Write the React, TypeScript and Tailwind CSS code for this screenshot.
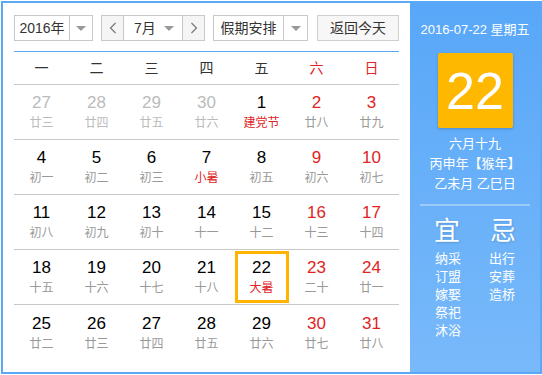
import React from "react";

type Day = { d: number; l: string; dim?: boolean; red?: boolean; lred?: boolean; sel?: boolean };

const weeks: Day[][] = [
  [
    { d: 27, l: "廿三", dim: true },
    { d: 28, l: "廿四", dim: true },
    { d: 29, l: "廿五", dim: true },
    { d: 30, l: "廿六", dim: true },
    { d: 1, l: "建党节", lred: true },
    { d: 2, l: "廿八", red: true },
    { d: 3, l: "廿九", red: true },
  ],
  [
    { d: 4, l: "初一" },
    { d: 5, l: "初二" },
    { d: 6, l: "初三" },
    { d: 7, l: "小暑", lred: true },
    { d: 8, l: "初五" },
    { d: 9, l: "初六", red: true },
    { d: 10, l: "初七", red: true },
  ],
  [
    { d: 11, l: "初八" },
    { d: 12, l: "初九" },
    { d: 13, l: "初十" },
    { d: 14, l: "十一" },
    { d: 15, l: "十二" },
    { d: 16, l: "十三", red: true },
    { d: 17, l: "十四", red: true },
  ],
  [
    { d: 18, l: "十五" },
    { d: 19, l: "十六" },
    { d: 20, l: "十七" },
    { d: 21, l: "十八" },
    { d: 22, l: "大暑", lred: true, sel: true },
    { d: 23, l: "二十", red: true },
    { d: 24, l: "廿一", red: true },
  ],
  [
    { d: 25, l: "廿二" },
    { d: 26, l: "廿三" },
    { d: 27, l: "廿四" },
    { d: 28, l: "廿五" },
    { d: 29, l: "廿六" },
    { d: 30, l: "廿七", red: true },
    { d: 31, l: "廿八", red: true },
  ],
];

const heads = ["一", "二", "三", "四", "五", "六", "日"];

const Caret = () => (
  <span className="w-0 h-0 border-x-[5px] border-x-transparent border-t-[5px] border-t-[#999]" />
);

const App = () => {
  return (
    <div className="w-[542px] h-[375px] pt-px pl-px bg-white font-['Liberation_Sans','Noto_Sans_CJK_SC',sans-serif]">
      <div className="flex h-[373px] border-2 border-[#5ba8f6]">
        {/* left calendar */}
        <div className="w-[407px] px-[11px] pt-[12px] bg-white">
          <div className="flex h-[26px] text-[14px] text-[#333]">
            <div className="flex w-[79px] border border-[#c8c8c8]">
              <div className="flex w-[55px] items-center justify-center border-r border-[#c8c8c8]">2016年</div>
              <div className="flex flex-1 items-center justify-center"><Caret /></div>
            </div>
            <div className="flex ml-[8px] w-[104px] border border-[#c8c8c8]">
              <div className="flex w-[22px] items-center justify-center bg-[#f5f5f5] border-r border-[#c8c8c8]">
                <svg width="8" height="12" viewBox="0 0 8 12"><path d="M6.5 1 L1.5 6 L6.5 11" fill="none" stroke="#777" strokeWidth="1.2" /></svg>
              </div>
              <div className="flex flex-1 items-center pl-[10px] pr-[8px] justify-between border-r border-[#c8c8c8]">
                <span>7月</span>
                <Caret />
              </div>
              <div className="flex w-[21px] items-center justify-center bg-[#f5f5f5]">
                <svg width="8" height="12" viewBox="0 0 8 12"><path d="M1.5 1 L6.5 6 L1.5 11" fill="none" stroke="#777" strokeWidth="1.2" /></svg>
              </div>
            </div>
            <div className="flex ml-[8px] w-[95px] border border-[#c8c8c8]">
              <div className="flex w-[70px] items-center justify-center border-r border-[#c8c8c8]">假期安排</div>
              <div className="flex flex-1 items-center justify-center"><Caret /></div>
            </div>
            <div className="flex ml-[9px] w-[82px] items-center justify-center border border-[#d0d0d0] bg-[#f7f7f7]">
              返回今天
            </div>
          </div>

          <div className="mt-[10px] border-t border-[#5ba8f6]" />
          <div className="grid grid-cols-7 h-[33px] items-center border-b border-[#c8c8c8] text-[14px] text-[#333]">
            {heads.map((h, i) => (
              <div key={h} className={`text-center ${i > 4 ? "text-[#e02424]" : ""}`}>{h}</div>
            ))}
          </div>

          {weeks.map((w, wi) => (
            <div
              key={wi}
              className={`grid grid-cols-7 h-[55px] ${wi < 4 ? "border-b border-[#c8c8c8]" : ""}`}
            >
              {w.map((c, ci) => (
                <div key={ci} className="flex items-center justify-center">
                  <div
                    className={`flex flex-col items-center justify-center w-[54px] h-[52px] ${
                      c.sel ? "border-[3px] border-[#ffb400]" : ""
                    }`}
                  >
                    <div
                      className={`text-[17px] leading-[20px] ${
                        c.dim ? "text-[#bbb]" : c.red ? "text-[#e02424]" : "text-black"
                      }`}
                    >
                      {c.d}
                    </div>
                    <div
                      className={`text-[12px] leading-[16px] mt-[2px] ${
                        c.lred ? "text-[#e02424]" : c.dim ? "text-[#bbb]" : "text-[#999]"
                      }`}
                    >
                      {c.l}
                    </div>
                  </div>
                </div>
              ))}
            </div>
          ))}
        </div>

        {/* right info panel */}
        <div className="flex-1 flex flex-col items-center bg-gradient-to-b from-[#58a7f8] to-[#78b9fa] text-white">
          <div className="mt-[19px] text-[13px] leading-[16px]">2016-07-22 星期五</div>
          <div className="mt-[15px] flex w-[75px] h-[75px] items-center justify-center rounded-[2px] bg-[#ffb800] shadow-[0_1px_3px_rgba(0,0,0,0.2)] text-[52px] leading-none">
            22
          </div>
          <div className="mt-[6px] text-[13px] leading-[20px] text-center">
            <div>六月十九</div>
            <div>丙申年【猴年】</div>
            <div>乙未月 乙巳日</div>
          </div>
          <div className="mt-[10px] w-[110px] h-[2px] bg-[#9ccbf9]" />
          <div className="mt-[9px] flex w-[92px] justify-between text-[26px] leading-[32px] [text-shadow:1px_1px_2px_rgba(0,0,0,0.15)]">
            <span className="w-[36px] text-center">宜</span>
            <span className="w-[36px] text-center">忌</span>
          </div>
          <div className="mt-[3px] flex w-[80px] justify-between text-[13px] leading-[18px]">
            <div className="flex flex-col">
              <span>纳采</span>
              <span>订盟</span>
              <span>嫁娶</span>
              <span>祭祀</span>
              <span>沐浴</span>
            </div>
            <div className="flex flex-col">
              <span>出行</span>
              <span>安葬</span>
              <span>造桥</span>
            </div>
          </div>
        </div>
      </div>
    </div>
  );
};

export default App;
